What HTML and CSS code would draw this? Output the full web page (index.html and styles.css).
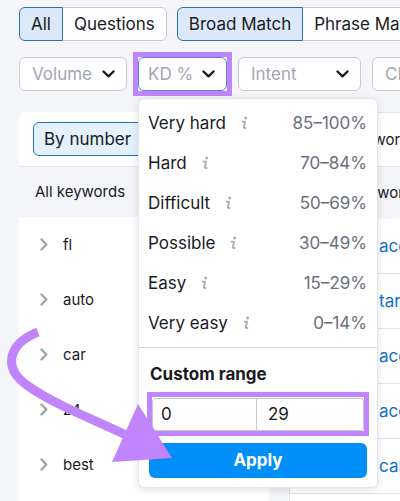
FILE: index.html
```html
<!DOCTYPE html>
<html>
<head>
<meta charset="utf-8">
<link rel="stylesheet" href="styles.css">
</head>
<body>
<div class="page">
  <div class="row-tabs">
    <div class="seg">
      <span class="seg-btn on">All</span>
      <span class="seg-btn">Questions</span>
    </div>
    <div class="seg">
      <span class="seg-btn on">Broad Match</span>
      <span class="seg-btn">Phrase Match</span>
      <span class="seg-btn">Exact Match</span>
    </div>
  </div>

  <div class="row-filters">
    <div class="filter f-volume"><span class="ph">Volume</span><svg class="chev" width="13" height="8" viewBox="0 0 13 8"><path d="M1.5 1.5 L6.5 6.3 L11.5 1.5"/></svg></div>
    <div class="kd-wrap">
      <div class="filter f-kd"><span class="ph">KD %</span><svg class="chev" width="13" height="8" viewBox="0 0 13 8"><path d="M1.5 1.5 L6.5 6.3 L11.5 1.5"/></svg></div>
      <div class="menu">
        <ul class="levels">
          <li><span class="lbl">Very hard</span><svg class="info" width="8" height="14" viewBox="0 0 8 14"><circle cx="5.6" cy="1.9" r="1.5"/><path d="M2.6 5.6 H5 L3.9 11 Q3.6 12.6 5.6 12"/></svg><span class="val">85–100%</span></li>
          <li><span class="lbl">Hard</span><svg class="info" width="8" height="14" viewBox="0 0 8 14"><circle cx="5.6" cy="1.9" r="1.5"/><path d="M2.6 5.6 H5 L3.9 11 Q3.6 12.6 5.6 12"/></svg><span class="val">70–84%</span></li>
          <li><span class="lbl">Difficult</span><svg class="info" width="8" height="14" viewBox="0 0 8 14"><circle cx="5.6" cy="1.9" r="1.5"/><path d="M2.6 5.6 H5 L3.9 11 Q3.6 12.6 5.6 12"/></svg><span class="val">50–69%</span></li>
          <li><span class="lbl">Possible</span><svg class="info" width="8" height="14" viewBox="0 0 8 14"><circle cx="5.6" cy="1.9" r="1.5"/><path d="M2.6 5.6 H5 L3.9 11 Q3.6 12.6 5.6 12"/></svg><span class="val">30–49%</span></li>
          <li><span class="lbl">Easy</span><svg class="info" width="8" height="14" viewBox="0 0 8 14"><circle cx="5.6" cy="1.9" r="1.5"/><path d="M2.6 5.6 H5 L3.9 11 Q3.6 12.6 5.6 12"/></svg><span class="val">15–29%</span></li>
          <li><span class="lbl">Very easy</span><svg class="info" width="8" height="14" viewBox="0 0 8 14"><circle cx="5.6" cy="1.9" r="1.5"/><path d="M2.6 5.6 H5 L3.9 11 Q3.6 12.6 5.6 12"/></svg><span class="val">0–14%</span></li>
        </ul>
        <div class="custom">
          <div class="custom-title">Custom range</div>
          <div class="range">
            <span class="inp inp-from">0</span>
            <span class="inp inp-to">29</span>
          </div>
          <div class="apply">Apply</div>
        </div>
      </div>
    </div>
    <div class="filter f-intent"><span class="ph">Intent</span><svg class="chev" width="13" height="8" viewBox="0 0 13 8"><path d="M1.5 1.5 L6.5 6.3 L11.5 1.5"/></svg></div>
    <div class="filter f-cpc"><span class="ph">CPC</span><svg class="chev" width="13" height="8" viewBox="0 0 13 8"><path d="M1.5 1.5 L6.5 6.3 L11.5 1.5"/></svg></div>
  </div>

  <div class="cards">
    <div class="card card-left">
      <div class="card-top">
        <div class="seg">
          <span class="seg-btn on light">By number</span>
          <span class="seg-btn">By volume</span>
        </div>
      </div>
      <div class="card-head">All keywords</div>
      <ul class="tree">
        <li><svg class="rchev" width="8" height="13" viewBox="0 0 8 13"><path d="M1.5 1.5 L6.3 6.5 L1.5 11.5"/></svg><span>fl</span></li>
        <li><svg class="rchev" width="8" height="13" viewBox="0 0 8 13"><path d="M1.5 1.5 L6.3 6.5 L1.5 11.5"/></svg><span>auto</span></li>
        <li><svg class="rchev" width="8" height="13" viewBox="0 0 8 13"><path d="M1.5 1.5 L6.3 6.5 L1.5 11.5"/></svg><span>car</span></li>
        <li><svg class="rchev" width="8" height="13" viewBox="0 0 8 13"><path d="M1.5 1.5 L6.3 6.5 L1.5 11.5"/></svg><span>z4</span></li>
        <li><svg class="rchev" width="8" height="13" viewBox="0 0 8 13"><path d="M1.5 1.5 L6.3 6.5 L1.5 11.5"/></svg><span>best</span></li>
      </ul>
    </div>
    <div class="card card-right">
      <div class="card-top r-top">All keywords</div>
      <div class="card-head r-head">Keyword</div>
      <ul class="links">
        <li><a>accessories</a></li>
        <li><a>target</a></li>
        <li><a>accent</a></li>
        <li><a>accord</a></li>
        <li><a>cabrio</a></li>
      </ul>
    </div>
  </div>

  <svg class="annot" width="400" height="501" viewBox="0 0 400 501">
    <path d="M38 332 C8 344, 2 368, 28 386 C55 405, 95 420, 128 436" fill="none" stroke="#c084fc" stroke-width="9"/>
    <polygon points="138,404 112,462 172,458" fill="#c084fc"/>
  </svg>
</div>
</body>
</html>
```

FILE: styles.css
```css
* { box-sizing: border-box; }
html, body {
  margin: 0;
  padding: 0;
  overflow: hidden;
  background: #f4f5f9;
}
body {
  font-family: Inter, "Noto Sans", sans-serif;
  color: #191b23;
  font-size: 17px;
  width: 400px;
  height: 501px;
}
.page {
  position: relative;
  width: 400px;
  height: 501px;
  overflow: hidden;
  padding: 7px 0 0 19px;
}
ul { list-style: none; margin: 0; padding: 0; }

.row-tabs {
  display: flex;
  gap: 10px;
  white-space: nowrap;
}
.seg { display: flex; flex: none; }
.seg-btn {
  position: relative;
  display: block;
  height: 34px;
  line-height: 32px;
  padding: 0 11px;
  border: 1px solid #c8cad2;
  background: #fff;
  margin-left: -1px;
  white-space: nowrap;
}
.seg-btn:first-child { margin-left: 0; border-radius: 6px 0 0 6px; }
.seg-btn:last-child { border-radius: 0 6px 6px 0; }
.seg-btn.on {
  z-index: 1;
  background: #dbe9fa;
  border-color: #2470c6;
}
.seg-btn.light { background: #e4f0fd; padding: 0 10px; }

.row-filters {
  display: flex;
  gap: 11px;
  margin-top: 16px;
  white-space: nowrap;
}
.filter {
  flex: none;
  height: 34px;
  display: flex;
  align-items: center;
  justify-content: space-between;
  padding: 0 11px 0 12px;
  border: 1px solid #c8cad2;
  border-radius: 6px;
  background: #fff;
}
.ph { color: #a3a6b0; }
.chev path { fill: none; stroke: #191b23; stroke-width: 2.4; stroke-linecap: round; stroke-linejoin: round; }
.f-volume { width: 108px; }
.kd-wrap { position: relative; flex: none; }
.f-kd {
  position: relative;
  width: 89px;
  padding-left: 9px;
  border-color: #4d8ad6;
}
.f-kd::after {
  content: "";
  position: absolute;
  inset: -6px;
  border: 5px solid #c084fc;
}
.f-intent { width: 123px; }
.f-cpc { width: 110px; }

.menu {
  position: absolute;
  z-index: 5;
  left: 0;
  top: 41px;
  width: 240px;
  background: #fff;
  border: 1px solid #e4e5ea;
  border-radius: 6px;
  box-shadow: 0 2px 8px rgba(25, 27, 35, 0.12);
}
.levels { padding: 4px 0; border-bottom: 1px solid #d6d8de; }
.levels li {
  display: flex;
  align-items: center;
  height: 40px;
  padding: 0 10px 0 9px;
}
.info { margin-left: 14px; }
.info circle { fill: #a7abb3; }
.info path { fill: none; stroke: #a7abb3; stroke-width: 1.8; stroke-linejoin: round; stroke-linecap: round; }
.val { margin-left: auto; color: #6c6e79; }

.custom { padding: 15px 10px 9px; }
.custom-title { font-weight: 700; line-height: 22px; padding-left: 1px; }
.range {
  position: relative;
  display: flex;
  margin: 13px 3px 0;
}
.range::after {
  content: "";
  position: absolute;
  inset: -6px -5px -5px;
  border: 5px solid #c084fc;
}
.inp {
  flex: 1;
  height: 33px;
  line-height: 31px;
  border: 1px solid #c6c8cf;
  background: #fff;
}
.inp-from { padding-left: 8px; border-radius: 4px 0 0 4px; }
.inp-to { padding-left: 11px; border-left: none; border-radius: 0 4px 4px 0; }
.apply {
  margin-top: 12px;
  height: 35px;
  line-height: 35px;
  border-radius: 6px;
  background: #008ff8;
  color: #fff;
  font-weight: 700;
  text-align: center;
}

.cards {
  display: flex;
  gap: 20px;
  margin-top: 21px;
}
.card {
  flex: none;
  background: #fff;
  border-radius: 6px 6px 0 0;
  height: 420px;
}
.card-left { width: 250px; }
.card-right { width: 200px; border: 1px solid #e4e5ea; border-right: none; white-space: nowrap; overflow: hidden; }
.card-top {
  height: 55px;
  padding: 10px 14px;
  border-bottom: 1px solid #e2e4ea;
}
.card-head {
  height: 50px;
  line-height: 50px;
  padding-left: 16px;
  background: #f4f5f9;
  font-size: 15px;
}
.tree li {
  display: flex;
  align-items: center;
  height: 55px;
  padding-left: 21px;
  font-size: 15px;
}
.rchev { margin-right: 15px; }
.rchev path { fill: none; stroke: #a0a3ab; stroke-width: 2.4; stroke-linecap: round; stroke-linejoin: round; }

.r-top { padding: 0 0 0 37px; line-height: 54px; height: 54px; font-size: 15px; }
.r-head { height: 52px; line-height: 52px; padding-left: 61px; }
.links li {
  height: 55px;
  line-height: 54px;
  padding-left: 89px;
  border-bottom: 1px solid #e4e5ea;
  font-size: 17px;
}
.links a { color: #0b6fcf; }

.annot {
  position: absolute;
  left: 0;
  top: 0;
  z-index: 10;
  pointer-events: none;
}
```
